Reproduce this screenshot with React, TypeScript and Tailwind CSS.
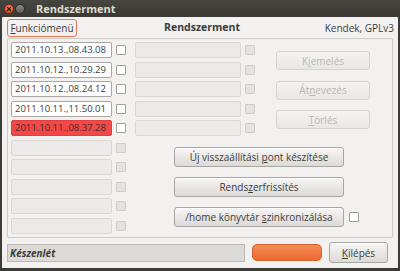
import React from "react";

const font = { fontFamily: '"Open Sans", "Noto Sans", sans-serif' };

function Entry({ text, red }: { text?: string; red?: boolean }) {
  if (text !== undefined) {
    return (
      <div
        className={`h-[16px] rounded-[2px] border flex items-center pl-[3px] text-[9.5px] leading-none ${
          red ? "bg-[#f24848] border-[#e04040] text-[#4a2a2a]" : "bg-white border-[#a9a7a3] text-[#3c3c3c]"
        }`}
      >
        <span>{text}</span>
      </div>
    );
  }
  return <div className="h-[16px] rounded-[2px] border border-[#d9d7d3] bg-[#ebeae8]" />;
}

function Check({ disabled }: { disabled?: boolean }) {
  return (
    <div
      className={`w-[10px] h-[10px] rounded-[1px] border ${
        disabled ? "border-[#cfcdc9] bg-[#e4e3e1]" : "border-[#a09e9a] bg-white"
      }`}
    />
  );
}

function Btn({
  children,
  disabled,
  className = "",
}: {
  children: React.ReactNode;
  disabled?: boolean;
  className?: string;
}) {
  return (
    <div
      className={`flex items-center justify-center rounded-[3px] border text-[10px] leading-none ${
        disabled
          ? "border-[#d6d4d0] bg-gradient-to-b from-[#f4f3f2] to-[#e8e7e5] text-[#b9b7b3]"
          : "border-[#a8a6a2] bg-gradient-to-b from-[#f7f6f5] to-[#dcdad6] text-[#3c3c3c] shadow-[inset_0_1px_0_#ffffff]"
      } ${className}`}
    >
      <span className="whitespace-pre">{children}</span>
    </div>
  );
}

const U = ({ c }: { c: string }) => <span className="underline underline-offset-[1px]">{c}</span>;

export default function App() {
  const left = [
    "2011.10.13.,08.43.08",
    "2011.10.12.,10.29.29",
    "2011.10.12.,08.24.12",
    "2011.10.11.,11.50.01",
    "2011.10.11.,08.37.28",
  ];
  return (
    <div className="w-[400px] h-[271px] bg-[#3c3b37] flex flex-col overflow-hidden" style={font}>
      {/* title bar */}
      <div className="h-[17px] flex items-center shrink-0 bg-gradient-to-b from-[#46453f] to-[#3a3935]">
        <div className="ml-[4px] w-[10px] h-[10px] rounded-full bg-gradient-to-b from-[#f58a5a] to-[#dd4814] border border-[#7a2a10] flex items-center justify-center">
          <svg width="6" height="6" viewBox="0 0 6 6">
            <path d="M1 1 L5 5 M5 1 L1 5" stroke="#3a1a0a" strokeWidth="1.2" />
          </svg>
        </div>
        <div className="ml-[1px] w-[10px] h-[10px] rounded-full bg-gradient-to-b from-[#8a8985] to-[#605f5b] border border-[#2e2d2a]" />
        <div className="ml-[11px] text-[11px] font-bold text-[#dfdbd2] leading-none">Rendszerment</div>
      </div>
      {/* body */}
      <div className="flex-1 mx-[2px] mb-[3px] bg-[#f2f1f0] flex flex-col pl-[5px] pr-[5px] rounded-t-[1px]">
        {/* header */}
        <div className="h-[21px] flex items-center relative shrink-0">
          <div className="mt-[1px] h-[18px] w-[70px] rounded-[3px] border border-[#e8775a] bg-[#f2f1f0] flex items-center justify-center text-[10px] text-[#3c3c3c] leading-none">
            <span>
              <U c="F" />unkciómenü
            </span>
          </div>
          <div className="absolute left-[157px] top-[5px] text-[10.5px] font-bold text-[#3c3c3c] leading-none">
            Rendszerment
          </div>
          <div className="ml-auto mr-[-1px] text-[10px] text-[#3c3c3c] leading-none">Kendek, GPLv3</div>
        </div>
        {/* frame */}
        <div className="h-[200px] w-[386px] border border-[#cfccc7] rounded-[2px] flex shrink-0">
          <div className="pl-[3px] pt-[3px] flex flex-col gap-[3.56px]">
            {Array.from({ length: 10 }).map((_, i) => (
              <div key={i} className="flex items-center h-[16px]">
                <div className="w-[101px]">
                  <Entry text={left[i]} red={i === 4} />
                </div>
                <div className="ml-[4px]">
                  <Check disabled={i >= 5} />
                </div>
                <div className="ml-[9px] w-[106px]">{i < 5 ? <Entry /> : null}</div>
                <div className="ml-[4px]">{i < 5 ? <Check disabled /> : null}</div>
              </div>
            ))}
          </div>
          <div className="flex flex-col">
            <div className="ml-[21px] mt-[12px] flex flex-col gap-[10.5px]">
              <Btn disabled className="w-[94px] h-[19px]">
                K<U c="i" />emelés
              </Btn>
              <Btn disabled className="w-[94px] h-[19px]">
                Át<U c="n" />evezés
              </Btn>
              <Btn disabled className="w-[94px] h-[19px]">
                <U c="T" />örlés
              </Btn>
            </div>
            <div className="ml-[-81px] mt-[18px] flex flex-col gap-[10px]">
              <Btn className="w-[170px] h-[20px]">
                {"Új visszaállítási "}<U c="p" />ont készítése
              </Btn>
              <Btn className="w-[170px] h-[20px]">
                Rends<U c="z" />erfrissítés
              </Btn>
              <div className="flex items-center">
                <Btn className="w-[170px] h-[20px]">
                  {"/home könyvtár "}<U c="s" />zinkronizálása
                </Btn>
                <div className="ml-[5px]">
                  <Check />
                </div>
              </div>
            </div>
          </div>
        </div>
        {/* bottom */}
        <div className="flex items-center mt-[4px]">
          <div className="w-[238px] h-[18px] border border-[#bdbab5] bg-[#dcdad6] flex items-center pl-[2px] text-[10px] font-bold italic text-[#3c3c3c] leading-none">
            Készenlét
          </div>
          <div className="ml-[7px] w-[70px] h-[17px] rounded-[5px] border border-[#d0602e] bg-gradient-to-b from-[#f58a52] to-[#ec6a32]" />
          <Btn className="ml-[7px] w-[59px] h-[21px]">
            <U c="K" />ilépés
          </Btn>
        </div>
      </div>
    </div>
  );
}
